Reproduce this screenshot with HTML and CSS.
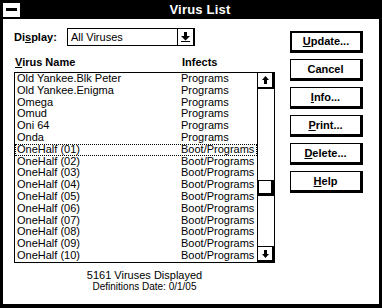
FILE: index.html
```html
<!DOCTYPE html>
<html>
<head>
  <title>Virus List</title>
  <link rel="stylesheet" href="styles.css">
</head>
<body>

<div class="window">
  <div class="titlebar">
    <div class="sysmenu"><span class="sysbar"></span></div>
    <div class="title">Virus List</div>
  </div>

  <div class="client">
    <div class="main">
      <div class="display-row">
        <span class="label">Di<u>s</u>play:</span>
        <div class="combo">
          <span class="combo-text">All Viruses</span>
          <span class="combo-btn">
            <svg width="9" height="10" viewBox="0 0 9 10"><path d="M3 0h3v4h3l-4.5 4.5L0 4h3z" fill="#000"/><rect x="0" y="9" width="9" height="1" fill="#000"/></svg>
          </span>
        </div>
      </div>

      <div class="col-heads">
        <span class="col-name"><u>V</u>irus Name</span>
        <span class="col-infects">Infects</span>
      </div>

      <div class="listbox">
        <div class="rows">
          <div class="row"><span class="name">Old Yankee.Blk Peter</span><span class="infects">Programs</span></div>
          <div class="row"><span class="name">Old Yankee.Enigma</span><span class="infects">Programs</span></div>
          <div class="row"><span class="name">Omega</span><span class="infects">Programs</span></div>
          <div class="row"><span class="name">Omud</span><span class="infects">Programs</span></div>
          <div class="row"><span class="name">Oni 64</span><span class="infects">Programs</span></div>
          <div class="row"><span class="name">Onda</span><span class="infects">Programs</span></div>
          <div class="row focused"><span class="name">OneHalf (01)</span><span class="infects">Boot/Programs</span></div>
          <div class="row"><span class="name">OneHalf (02)</span><span class="infects">Boot/Programs</span></div>
          <div class="row"><span class="name">OneHalf (03)</span><span class="infects">Boot/Programs</span></div>
          <div class="row"><span class="name">OneHalf (04)</span><span class="infects">Boot/Programs</span></div>
          <div class="row"><span class="name">OneHalf (05)</span><span class="infects">Boot/Programs</span></div>
          <div class="row"><span class="name">OneHalf (06)</span><span class="infects">Boot/Programs</span></div>
          <div class="row"><span class="name">OneHalf (07)</span><span class="infects">Boot/Programs</span></div>
          <div class="row"><span class="name">OneHalf (08)</span><span class="infects">Boot/Programs</span></div>
          <div class="row"><span class="name">OneHalf (09)</span><span class="infects">Boot/Programs</span></div>
          <div class="row"><span class="name">OneHalf (10)</span><span class="infects">Boot/Programs</span></div>
        </div>
        <div class="scrollbar">
          <div class="sb-btn">
            <svg width="7" height="8" viewBox="0 0 7 8"><path d="M3.5 0L7 4H5v4H2V4H0z" fill="#000"/></svg>
          </div>
          <div class="sb-track"><div class="sb-thumb"></div></div>
          <div class="sb-btn">
            <svg width="7" height="8" viewBox="0 0 7 8"><path d="M2 0h3v4h2L3.5 8 0 4h2z" fill="#000"/></svg>
          </div>
        </div>
      </div>

      <div class="status">
        <div class="count">5161 Viruses Displayed</div>
        <div class="defs">Definitions Date: 0/1/05</div>
      </div>
    </div>

    <div class="buttons">
      <div class="btn default"><u>U</u>pdate...</div>
      <div class="btn">Cancel</div>
      <div class="btn"><u>I</u>nfo...</div>
      <div class="btn"><u>P</u>rint...</div>
      <div class="btn"><u>D</u>elete...</div>
      <div class="btn"><u>H</u>elp</div>
    </div>
  </div>
</div>

</body>
</html>
```

FILE: styles.css
```css
body {
  margin: 0;
  background: #fff;
  font-family: 'Liberation Sans', Arial, sans-serif;
  font-size: 11px;
  color: #000;
}

/* Window frame */
.window {
  width: 382px;
  height: 308px;
  box-sizing: border-box;
  border-left: 3px solid #000;
  border-right: 3px solid #000;
  border-bottom: 4px solid #000;
  background: #fff;
  overflow: hidden;
}

.titlebar {
  height: 19px;
  background: #000;
  display: flex;
  align-items: center;
}

.sysmenu {
  width: 17px;
  height: 14px;
  margin-left: -1px;
  background: #fff;
  border: 1px solid #000;
  display: flex;
  align-items: center;
  justify-content: center;
}

.sysbar {
  width: 11px;
  height: 3px;
  background: #000;
}

.title {
  flex: 1;
  text-align: center;
  color: #fff;
  font-weight: bold;
  font-size: 13px;
  letter-spacing: 0.2px;
}

/* Client area */
.client {
  display: flex;
}

.main {
  width: 261px;
  margin-left: 11px;
}

.display-row {
  display: flex;
  align-items: center;
  margin-top: 9px;
  height: 18px;
}

.label {
  font-weight: bold;
  width: 53px;
}

.combo {
  width: 128px;
  height: 18px;
  box-sizing: border-box;
  border: 1px solid #000;
  display: flex;
}

.combo-text {
  flex: 1;
  padding-left: 3px;
  line-height: 16px;
}

.combo-btn {
  width: 15px;
  border-left: 1px solid #000;
  border-right: 1px solid #000;
  display: flex;
  align-items: center;
  justify-content: center;
}

.col-heads {
  display: flex;
  margin-top: 8px;
  height: 16px;
  line-height: 16px;
  font-weight: bold;
}

.col-name {
  width: 167px;
  padding-left: 1px;
}

/* List box */
.listbox {
  margin-top: 2px;
  height: 191px;
  box-sizing: border-box;
  border: 1px solid #000;
  display: flex;
}

.rows {
  flex: 1;
  overflow: hidden;
}

.row {
  height: 11.8px;
  line-height: 11.8px;
  display: flex;
  box-sizing: border-box;
  white-space: nowrap;
}

.row .name {
  width: 164px;
  padding-left: 2px;
}

.row.focused {
  outline: 1px dotted #000;
  outline-offset: -1px;
}

.scrollbar {
  width: 16px;
  border-left: 1px solid #000;
  display: flex;
  flex-direction: column;
}

.sb-btn {
  height: 16px;
  box-sizing: border-box;
  border-bottom: 2px solid #000;
  border-right: 2px solid #000;
  display: flex;
  align-items: center;
  justify-content: center;
}

.sb-btn:last-child {
  border-top: 1px solid #000;
}

.sb-track {
  flex: 1;
}

.sb-thumb {
  margin-top: 91px;
  height: 16px;
  box-sizing: border-box;
  border: 1px solid #000;
  border-right-width: 3px;
  border-bottom-width: 3px;
}

/* Status text */
.status {
  margin-top: 6px;
  text-align: center;
}

.count {
  line-height: 12px;
  font-size: 11px;
}

.defs {
  line-height: 12px;
  font-size: 10px;
}

/* Buttons */
.buttons {
  margin-left: 15px;
  margin-top: 12px;
  display: flex;
  flex-direction: column;
  gap: 6px;
}

.btn {
  width: 73px;
  height: 22px;
  box-sizing: border-box;
  border: 1px solid #000;
  border-right-width: 3px;
  border-bottom-width: 3px;
  font-weight: bold;
  text-align: center;
  line-height: 18px;
}

.btn.default {
  border-width: 2px 3px 3px 2px;
  line-height: 17px;
}
```
